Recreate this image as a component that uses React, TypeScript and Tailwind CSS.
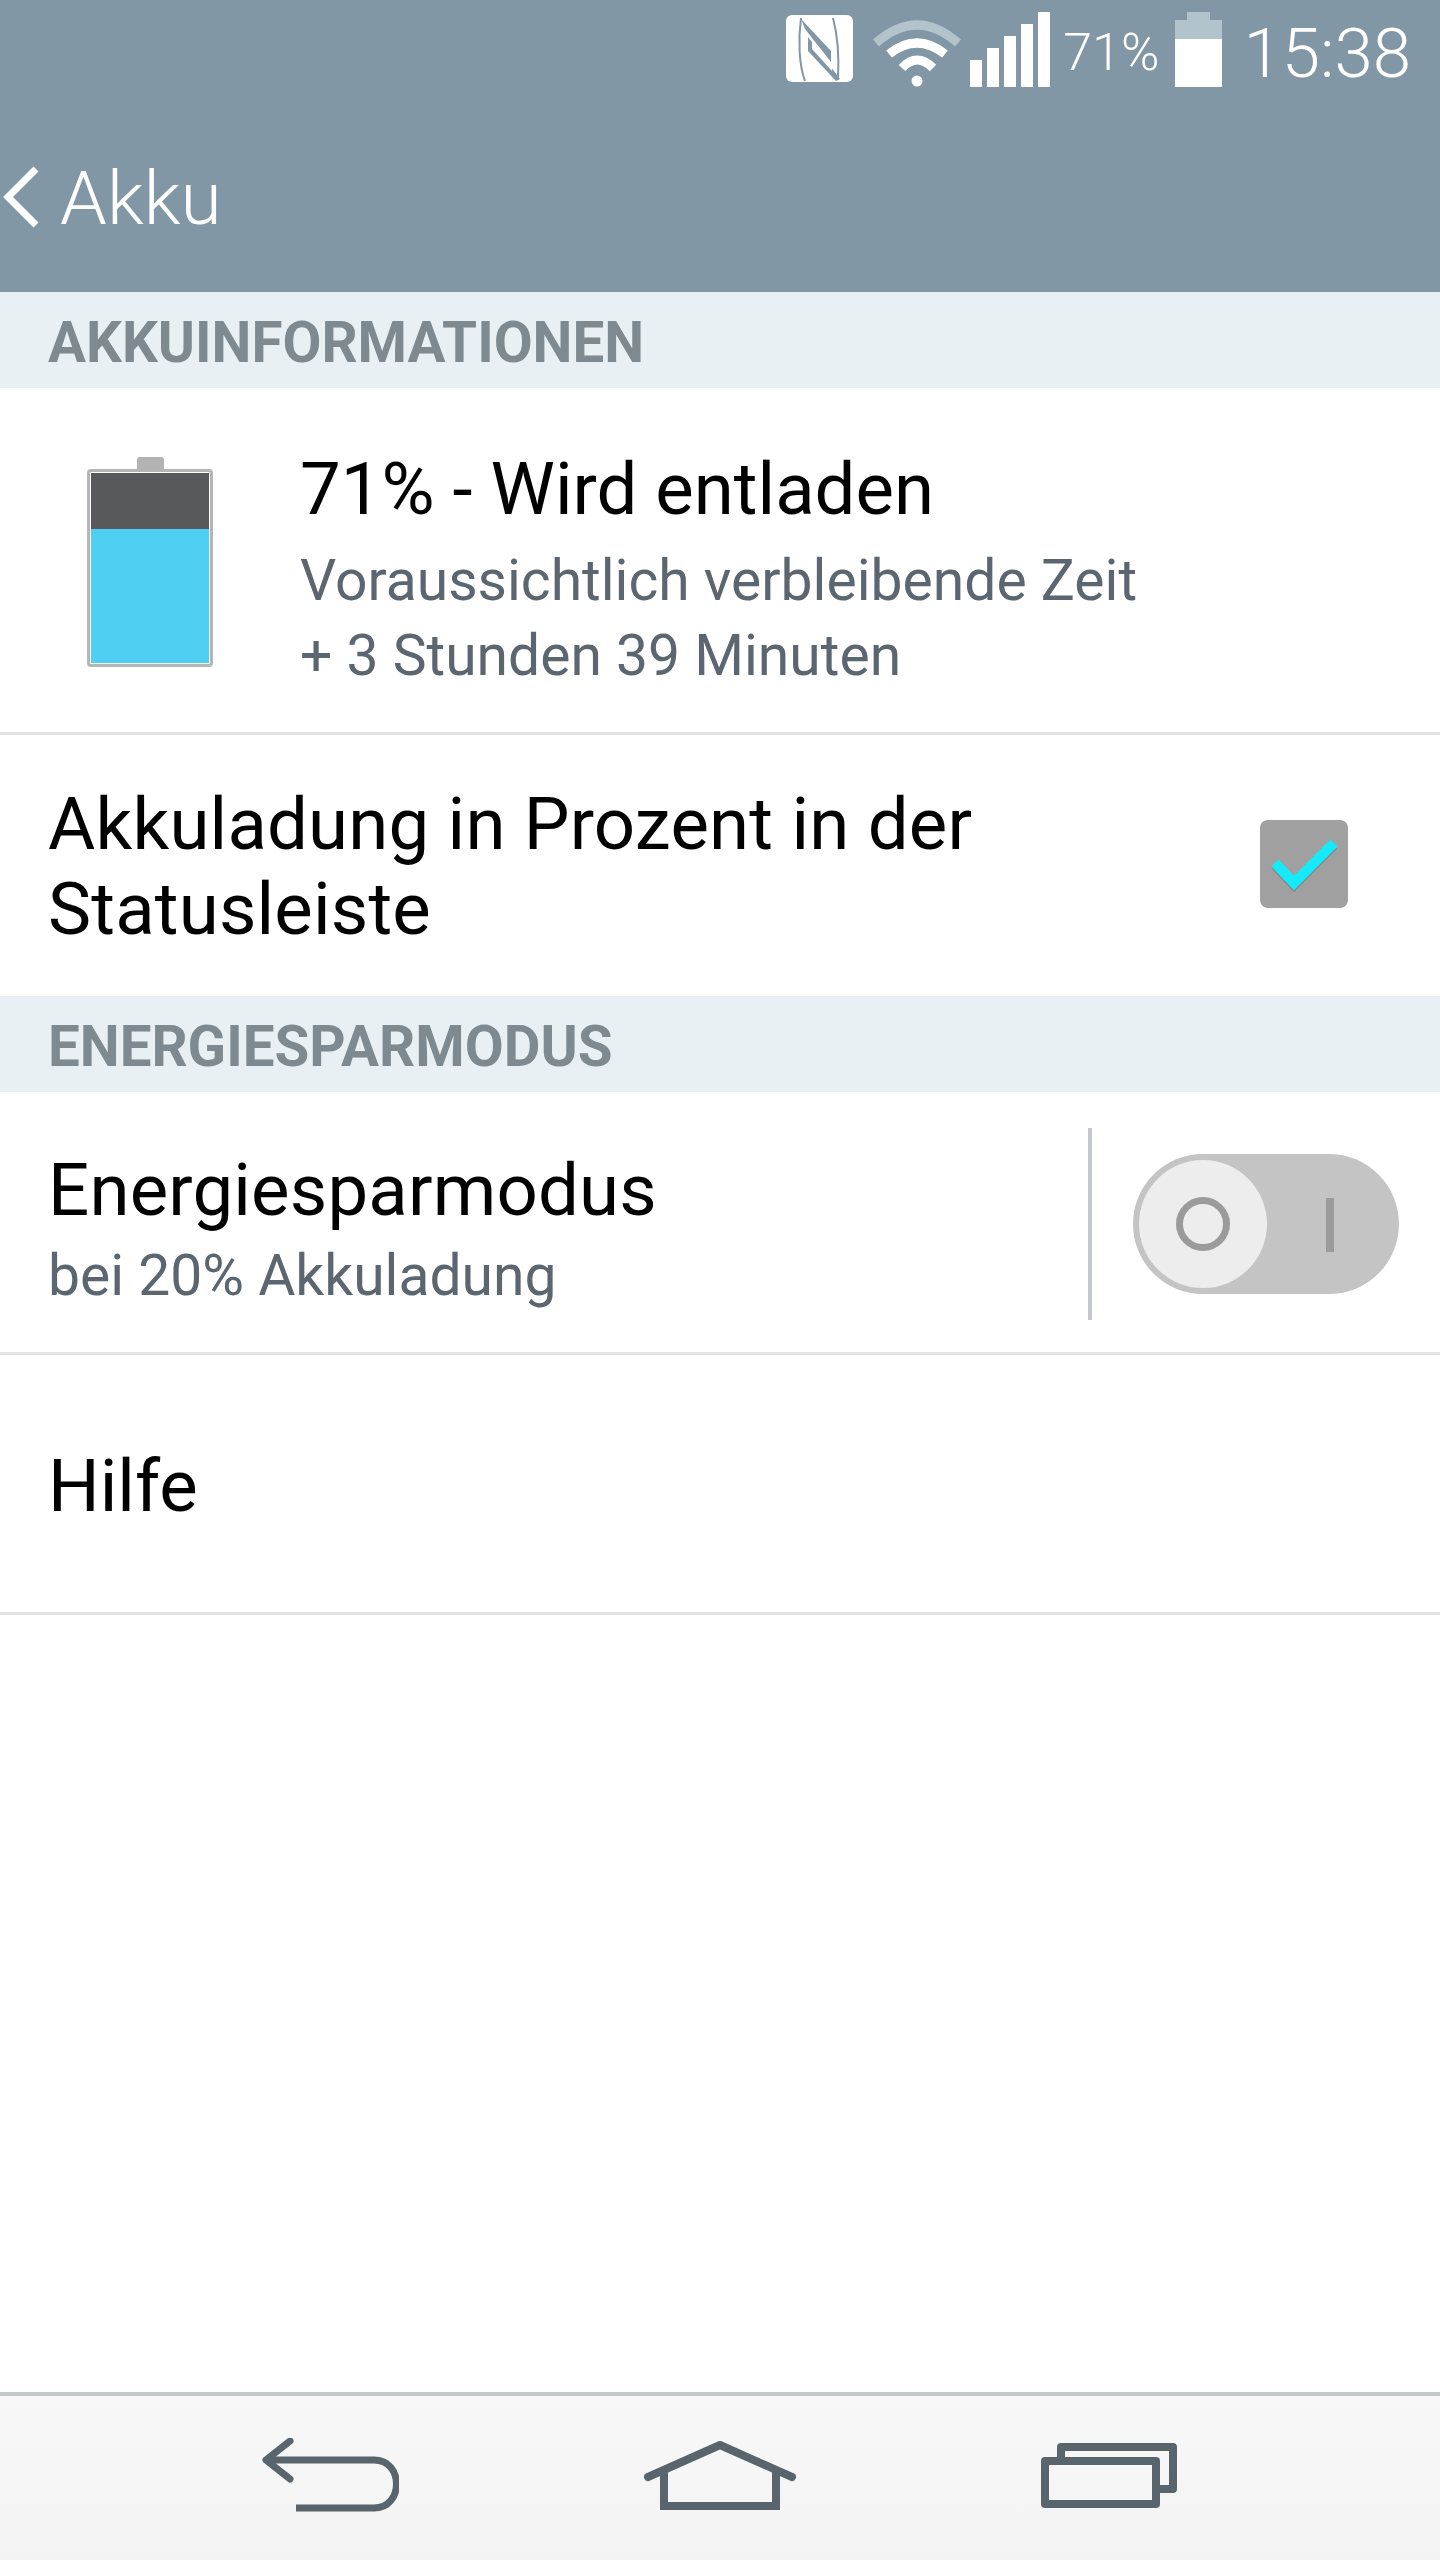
const roboto = "font-['Roboto','Liberation_Sans',sans-serif]";

function NfcIcon() {
  return (
    <svg width="67" height="67" viewBox="0 0 67 67" className="mb-[5px] mr-[20px]">
      <rect x="0" y="0" width="67" height="67" rx="6" fill="#fff" />
      <path d="M15 3 C12 25 13 50 19 66 M47 3 C53 25 53 45 52 64" fill="none" stroke="#8197a5" strokeWidth="2" />
      <path d="M15 4 L45 36 V47 L19 14 Z" fill="#8197a5" />
      <path d="M22 22 L22 36 L50 66 L54 64 Z" fill="#8197a5" />
      <path d="M26 27 L26 34 L46 56 L46 49 Z" fill="#fff" />
    </svg>
  );
}

function WifiIcon() {
  return (
    <svg width="88" height="67" viewBox="0 0 88 67" className="mr-[9px]">
      <path d="M3 23 Q44 -13 85 23" fill="none" stroke="#b3c3cb" strokeWidth="9" />
      <path d="M16 34 Q44 12 72 34" fill="none" stroke="#fff" strokeWidth="9" />
      <path d="M29 48 Q44 32 60 48" fill="none" stroke="#fff" strokeWidth="9" />
      <circle cx="44" cy="61" r="5.5" fill="#fff" />
    </svg>
  );
}

function SignalIcon() {
  const bars = [27, 39, 51, 63, 75];
  return (
    <div className="flex items-end gap-[5px] h-[75px] mr-[13px]">
      {bars.map((h) => (
        <div key={h} className="w-[12px] bg-white" style={{ height: h }} />
      ))}
    </div>
  );
}

function StatusBattery() {
  return (
    <div className="flex flex-col items-center w-[47px] h-[75px] ml-[16px] mr-[21px]">
      <div className="w-[23px] h-[8px] bg-[#b3c3cb]" />
      <div className="w-full h-[19px] bg-[#b3c3cb]" />
      <div className="w-full flex-1 bg-white" />
    </div>
  );
}

function BigBattery() {
  return (
    <div className="flex flex-col items-center w-[126px] ml-[87px] mt-[4px] shrink-0">
      <div className="w-[27px] h-[12px] bg-[#b3b3b3] rounded-t-[3px]" />
      <div className="w-full h-[198px] border-[3px] border-[#b5b5b5] rounded-[4px] p-[1px] flex flex-col">
        <div className="h-[56px] bg-[#58595b]" />
        <div className="flex-1 bg-[#4fd0f2]" />
      </div>
    </div>
  );
}

function SectionHeader({ children }: { children: string }) {
  return (
    <div className="h-[96px] bg-[#e8f0f3] flex items-center pl-[48px] pt-[6px]">
      <span className="text-[56.5px] font-bold text-[#7f8a90] leading-none">{children}</span>
    </div>
  );
}

function Divider() {
  return <div className="h-[3px] bg-[#e1e3e4]" />;
}

function BackKey() {
  return (
    <svg width="137" height="74" viewBox="0 0 137 74">
      <path d="M4 22 H112 C142 22 142 70 112 70 H34" fill="none" stroke="#59656d" strokeWidth="7" />
      <path d="M28 3 L4 22 L28 41" fill="none" stroke="#59656d" strokeWidth="7" strokeLinecap="round" strokeLinejoin="round" />
    </svg>
  );
}

function HomeKey() {
  return (
    <svg width="152" height="69" viewBox="0 0 152 69">
      <path d="M4 36 L76 4 L148 36" fill="none" stroke="#59656d" strokeWidth="8" strokeLinecap="round" strokeLinejoin="round" />
      <path d="M20 30 V65 H132 V30" fill="none" stroke="#59656d" strokeWidth="8" />
    </svg>
  );
}

function RecentKey() {
  return (
    <svg width="136" height="65" viewBox="0 0 136 65">
      <path d="M20 16 V4 H132 V46 H117" fill="none" stroke="#59656d" strokeWidth="8" strokeLinejoin="round" />
      <rect x="4" y="18" width="111" height="43" fill="none" stroke="#59656d" strokeWidth="8" strokeLinejoin="round" />
    </svg>
  );
}

export default function App() {
  return (
    <div className={`h-[2560px] w-[1440px] flex flex-col bg-white text-black ${roboto}`}>
      <div className="h-[292px] bg-[#8197a5] text-white shrink-0">
        <div className="flex items-end justify-end h-[100px] pb-[13px]">
          <NfcIcon />
          <WifiIcon />
          <SignalIcon />
          <span className="text-[52px] font-light leading-none mb-[8px]">71%</span>
          <StatusBattery />
          <span className="text-[69px] font-light leading-none -mb-[1px] mr-[29px]">15:38</span>
        </div>
        <div className="flex items-center h-[192px]">
          <svg width="40" height="64" viewBox="0 0 40 64" className="mt-[2px]">
            <path d="M36 4 L8 32 L36 60" fill="none" stroke="#fff" strokeWidth="7" />
          </svg>
          <span className="text-[75px] font-light leading-none ml-[20px] mt-[5px]">Akku</span>
        </div>
      </div>

      <SectionHeader>AKKUINFORMATIONEN</SectionHeader>
      <div className="h-[344px] flex items-center">
        <BigBattery />
        <div className="ml-[87px] flex flex-col pt-[10px]">
          <span className="text-[72.5px] leading-[106px]">71% - Wird entladen</span>
          <span className="text-[57px] leading-[75px] text-[#5c6670]">Voraussichtlich verbleibende Zeit</span>
          <span className="text-[57px] leading-[75px] text-[#5c6670]">+ 3 Stunden 39 Minuten</span>
        </div>
      </div>
      <Divider />
      <div className="h-[261px] flex items-center justify-between pl-[48px] pr-[92px]">
        <span className="text-[72.5px] leading-[85px] pt-[3px] tracking-[0.2px]">
          Akkuladung in Prozent in der
          <br />
          Statusleiste
        </span>
        <div className="w-[88px] h-[88px] rounded-[8px] bg-[#a0a0a0] -mt-[4px]">
          <svg width="88" height="88" viewBox="0 0 88 88">
            <path d="M15 45 L34 65 L74 25" fill="none" stroke="#7f8a8e" strokeWidth="10" />
            <path d="M15 43 L34 63 L74 23" fill="none" stroke="#15eafb" strokeWidth="10" />
          </svg>
        </div>
      </div>
      <SectionHeader>ENERGIESPARMODUS</SectionHeader>
      <div className="h-[260px] flex items-center pl-[48px] pt-[3px]">
        <div className="flex-1 flex flex-col pt-[12px]">
          <span className="text-[72.5px] leading-[92px] tracking-[0.2px]">Energiesparmodus</span>
          <span className="text-[57px] leading-[78px] text-[#5c6670]">bei 20% Akkuladung</span>
        </div>
        <div className="w-[4px] h-[192px] bg-[#c5c9ce]" />
        <div className="w-[266px] h-[140px] rounded-full bg-[#c4c4c4] ml-[41px] mr-[41px] flex items-center pl-[6px] relative">
          <div className="w-[128px] h-[128px] rounded-full bg-[#ededed] flex items-center justify-center">
            <div className="w-[54px] h-[54px] rounded-full border-[7px] border-[#9b9b9b]" />
          </div>
          <div className="absolute left-[193px] top-[44px] w-[8px] h-[54px] bg-[#9b9b9b]" />
        </div>
      </div>
      <Divider />
      <div className="h-[257px] flex items-center pl-[48px]">
        <span className="text-[72.5px] leading-none pt-[8px]">Hilfe</span>
      </div>
      <Divider />
      <div className="flex-1" />
      <div className="h-[168px] shrink-0 border-t-[4px] border-[#c3c8ca] bg-gradient-to-b from-[#f8f8f8] to-[#f3f3f3] flex items-center gap-[245px] pl-[262px] pb-[6px]">
        <BackKey />
        <HomeKey />
        <RecentKey />
      </div>
    </div>
  );
}
